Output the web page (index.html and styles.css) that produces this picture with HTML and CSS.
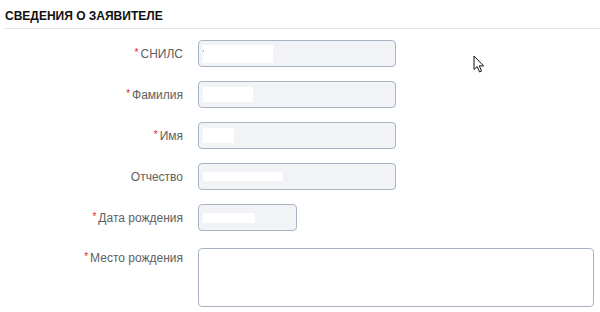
FILE: index.html
```html
<!DOCTYPE html>
<html lang="ru">
<head>
<meta charset="utf-8">
<link rel="stylesheet" href="styles.css">
</head>
<body>
<div class="page">
  <h2 class="section-title">СВЕДЕНИЯ О ЗАЯВИТЕЛЕ</h2>
  <div class="form">
    <div class="row">
      <div class="label"><span class="req">*</span>СНИЛС</div>
      <div class="field"><span class="dot"></span><span class="mask" style="width:70px;height:18px"></span></div>
    </div>
    <div class="row">
      <div class="label"><span class="req">*</span>Фамилия</div>
      <div class="field"><span class="mask" style="width:50px;height:15px"></span></div>
    </div>
    <div class="row">
      <div class="label"><span class="req">*</span>Имя</div>
      <div class="field"><span class="mask" style="width:31px;height:15px"></span></div>
    </div>
    <div class="row">
      <div class="label">Отчество</div>
      <div class="field"><span class="mask" style="width:80px;height:9px"></span></div>
    </div>
    <div class="row">
      <div class="label"><span class="req">*</span>Дата рождения</div>
      <div class="field field-short"><span class="mask" style="width:52px;height:10px"></span></div>
    </div>
    <div class="row row-top">
      <div class="label"><span class="req">*</span>Место рождения</div>
      <div class="field field-area"></div>
    </div>
  </div>
  <svg class="cursor" width="13" height="19" viewBox="0 0 13 19" aria-hidden="true">
    <path d="M1 1 L1 14.5 L4.2 11.6 L6.6 17 L8.6 16.1 L6.3 10.9 L10.6 10.9 Z" fill="#fff" stroke="#111" stroke-width="1" stroke-linejoin="miter"/>
  </svg>
</div>
</body>
</html>
```

FILE: styles.css
```css
* { box-sizing: border-box; }
html, body { margin: 0; padding: 0; background: #fff; }
body {
  font-family: "Liberation Sans", Arial, sans-serif;
  color: #555;
}
.page {
  position: relative;
  width: 600px;
  height: 312px;
  overflow: hidden;
  padding: 9px 0 0 5px;
}
.section-title {
  margin: 0;
  font-size: 12px;
  font-weight: bold;
  color: #111;
  line-height: 14px;
  padding-bottom: 5px;
  border-bottom: 1px solid #e3e5e8;
}
.form {
  display: flex;
  flex-direction: column;
  gap: 14px;
  padding-top: 11px;
}
.row {
  display: flex;
  align-items: center;
}
.row-top {
  align-items: flex-start;
  margin-top: 3px;
}
.label {
  width: 178px;
  text-align: right;
  font-size: 12px;
  color: #606060;
  margin-right: 15px;
}
.row-top .label { padding-top: 3px; }
.req {
  color: #e0242b;
  font-size: 10px;
  position: relative;
  top: -2px;
  margin-right: 2px;
}
.field {
  position: relative;
  width: 198px;
  height: 27px;
  background: #f1f3f6;
  border: 1px solid #a8b3c4;
  border-radius: 4px;
  display: flex;
  align-items: center;
  padding-left: 4px;
}
.field-short { width: 99px; }
.field-area {
  width: 396px;
  height: 59px;
  background: #fff;
}
.mask {
  display: block;
  background: #fff;
}
.dot {
  position: absolute;
  left: 4px;
  top: 9px;
  width: 1px;
  height: 2px;
  background: #b0b4bb;
}
.cursor {
  position: absolute;
  left: 473px;
  top: 55px;
}
```
